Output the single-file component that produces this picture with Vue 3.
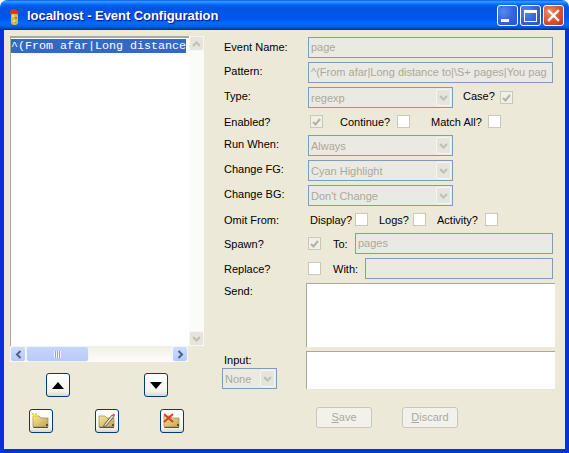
<script setup>
const folderBtns = ['new', 'edit', 'del']
</script>

<template>
  <div class="win">
    <div class="title">
      <svg class="appicon" width="16" height="20" viewBox="0 0 16 20">
        <rect x="4" y="8" width="7" height="12" rx="3" fill="#d9b84a" />
        <rect x="5" y="10" width="2" height="2" fill="#f3dc7a" />
        <rect x="8" y="12" width="2" height="2" fill="#a58a2c" />
        <rect x="6" y="15" width="2" height="2" fill="#f3dc7a" />
        <rect x="8" y="17" width="1" height="1" fill="#a58a2c" />
        <path d="M3 8 L3 6 Q4 4 7 4 Q10 4 10 6 L13 6.500 L11 8 Z" fill="#d8342a" />
        <rect x="3" y="8" width="8" height="1" fill="#8a7420" />
      </svg>
      <span class="title-text">localhost - Event Configuration</span>
      <div class="caps">
        <div class="cap blue">
          <span class="min-glyph"></span>
        </div>
        <div class="cap blue">
          <span class="max-glyph"></span>
        </div>
        <div class="cap red">
          <svg width="13" height="13" viewBox="0 0 13 13">
            <path d="M2 2 L11 11 M11 2 L2 11" stroke="#fff" stroke-width="2.400" stroke-linecap="square" />
          </svg>
        </div>
      </div>
    </div>

    <div class="client">
      <div class="left">
        <div class="listwrap">
          <div class="list">
            <div class="list-item">^(From afar|Long distance</div>
          </div>
          <div class="vscroll">
            <div class="vbtn">
              <svg width="9" height="6" viewBox="0 0 9 6"><path d="M1 5 L4.500 1.500 L8 5" fill="none" stroke="#c0bfb4" stroke-width="2" /></svg>
            </div>
            <div class="vbtn">
              <svg width="9" height="6" viewBox="0 0 9 6"><path d="M1 1 L4.500 4.500 L8 1" fill="none" stroke="#c0bfb4" stroke-width="2" /></svg>
            </div>
          </div>
        </div>
        <div class="hscroll">
          <div class="hbtn">
            <svg width="7" height="9" viewBox="0 0 7 9"><path d="M5.500 1 L2 4.500 L5.500 8" fill="none" stroke="#4d6185" stroke-width="2" /></svg>
          </div>
          <div class="thumb">
            <span class="grip"></span>
          </div>
          <div class="hspace"></div>
          <div class="hbtn">
            <svg width="7" height="9" viewBox="0 0 7 9"><path d="M1.500 1 L5 4.500 L1.500 8" fill="none" stroke="#4d6185" stroke-width="2" /></svg>
          </div>
        </div>
        <div class="updown">
          <div class="tbtn">
            <svg width="12" height="7" viewBox="0 0 12 7"><path d="M6 0 L12 7 L0 7 Z" fill="#000" /></svg>
          </div>
          <div class="tbtn">
            <svg width="12" height="7" viewBox="0 0 12 7"><path d="M0 0 L12 0 L6 7 Z" fill="#000" /></svg>
          </div>
        </div>
        <div class="folders">
          <div v-for="b in folderBtns" :key="b" class="tbtn">
            <svg width="18" height="16" viewBox="0 0 18 16">
              <defs>
                <linearGradient :id="'g' + b" x1="0" y1="0" x2="1" y2="1">
                  <stop offset="0" stop-color="#f6e89e" />
                  <stop offset="1" stop-color="#c2a24e" />
                </linearGradient>
              </defs>
              <path d="M1 3 L7 3 L9 5 L16 5 L16 14 L1 14 Z" :fill="'url(#g' + b + ')'" stroke="#8a7a4a" stroke-width="0.600" />
              <path d="M1 14 L16 14 L16 15 L2 15 Z" fill="#5e5232" />
              <rect x="14" y="11" width="2" height="2" fill="#5e5232" />
              <g v-if="b === 'new'" fill="#f0d84a">
                <rect x="0" y="0" width="2" height="2" />
                <rect x="3" y="0" width="2" height="2" />
                <rect x="1" y="2" width="2" height="2" />
                <rect x="4" y="3" width="2" height="2" />
                <rect x="0" y="4" width="2" height="2" />
                <rect x="3" y="6" width="2" height="2" />
              </g>
              <g v-if="b === 'edit'">
                <path d="M6 12 L14 2 L16 3.500 L8 13 L5.500 13.500 Z" fill="#e8dfc0" stroke="#4a4a4a" stroke-width="0.800" />
                <path d="M14 2 L15.500 0.500 L17.500 2 L16 3.500 Z" fill="#d06060" />
              </g>
              <g v-if="b === 'del'">
                <path d="M1 1 L10 9 M10 1 L1 9" stroke="#e03a2c" stroke-width="2" />
              </g>
            </svg>
          </div>
        </div>
      </div>

      <div class="form">
        <div class="row raise1">
          <span class="lbl">Event Name:</span>
          <div class="field grow">page</div>
        </div>
        <div class="row raise2">
          <span class="lbl">Pattern:</span>
          <div class="field grow clip">^(From afar|Long distance to|\S+ pages|You pag</div>
        </div>
        <div class="row raise2">
          <span class="lbl">Type:</span>
          <div class="select sel145"><span class="seltext">regexp</span><span class="arrow"><svg width="9" height="6" viewBox="0 0 9 6"><path d="M1 1 L4.500 4.500 L8 1" fill="none" stroke="#c0bfb4" stroke-width="2" /></svg></span></div>
          <span class="t case-l">Case?</span>
          <span class="cb on"><svg width="9" height="8" viewBox="0 0 9 8"><path d="M1 4 L3.500 6.500 L8 1" fill="none" stroke="#b5b2a2" stroke-width="2" /></svg></span>
        </div>
        <div class="row check">
          <span class="lbl">Enabled?</span>
          <span class="cb on m2"><svg width="9" height="8" viewBox="0 0 9 8"><path d="M1 4 L3.500 6.500 L8 1" fill="none" stroke="#b5b2a2" stroke-width="2" /></svg></span>
          <span class="t cont-l">Continue?</span>
          <span class="cb"></span>
          <span class="t match-l">Match All?</span>
          <span class="cb"></span>
        </div>
        <div class="row raise2">
          <span class="lbl">Run When:</span>
          <div class="select sel145"><span class="seltext">Always</span><span class="arrow"><svg width="9" height="6" viewBox="0 0 9 6"><path d="M1 1 L4.500 4.500 L8 1" fill="none" stroke="#c0bfb4" stroke-width="2" /></svg></span></div>
        </div>
        <div class="row raise2">
          <span class="lbl">Change FG:</span>
          <div class="select sel145"><span class="seltext">Cyan Highlight</span><span class="arrow"><svg width="9" height="6" viewBox="0 0 9 6"><path d="M1 1 L4.500 4.500 L8 1" fill="none" stroke="#c0bfb4" stroke-width="2" /></svg></span></div>
        </div>
        <div class="row raise2">
          <span class="lbl">Change BG:</span>
          <div class="select sel145"><span class="seltext">Don't Change</span><span class="arrow"><svg width="9" height="6" viewBox="0 0 9 6"><path d="M1 1 L4.500 4.500 L8 1" fill="none" stroke="#c0bfb4" stroke-width="2" /></svg></span></div>
        </div>
        <div class="row check">
          <span class="lbl">Omit From:</span>
          <span class="t disp-l">Display?</span>
          <span class="cb"></span>
          <span class="t logs-l">Logs?</span>
          <span class="cb"></span>
          <span class="t act-l">Activity?</span>
          <span class="cb"></span>
        </div>
        <div class="row">
          <span class="lbl">Spawn?</span>
          <span class="cb on"><svg width="9" height="8" viewBox="0 0 9 8"><path d="M1 4 L3.500 6.500 L8 1" fill="none" stroke="#b5b2a2" stroke-width="2" /></svg></span>
          <span class="t to-l">To:</span>
          <div class="field grow">pages</div>
        </div>
        <div class="row">
          <span class="lbl">Replace?</span>
          <span class="cb"></span>
          <span class="t with-l">With:</span>
          <div class="field grow"></div>
        </div>
        <div class="send">
          <span class="lbl send-l">Send:</span>
          <div class="area send-a"></div>
        </div>
        <div class="input-row">
          <div class="input-col">
            <span class="t input-l">Input:</span>
            <div class="select sel55"><span class="seltext">None</span><span class="arrow"><svg width="9" height="6" viewBox="0 0 9 6"><path d="M1 1 L4.500 4.500 L8 1" fill="none" stroke="#c0bfb4" stroke-width="2" /></svg></span></div>
          </div>
          <div class="area input-a"></div>
        </div>
        <div class="actions">
          <div class="btn"><u>S</u>ave</div>
          <div class="btn"><u>D</u>iscard</div>
        </div>
      </div>
    </div>
  </div>
</template>

<style>
html, body { margin: 0; background: #fff; }
</style>

<style scoped>
.win {
  width: 569px;
  height: 453px;
  display: flex;
  flex-direction: column;
  font-family: "Liberation Sans", "Noto Sans", sans-serif;
  font-size: 11px;
  color: #000;
  overflow: hidden;
}
.title {
  height: 30px;
  flex: none;
  box-sizing: border-box;
  padding: 1px 5px 0 7px;
  display: flex;
  align-items: center;
  border-radius: 7px 7px 0 0;
  background: linear-gradient(180deg, #0058ee 0%, #3593ff 5%, #288eff 8%, #127dff 11%, #036ffc 14%, #0262ee 18%, #0057e5 24%, #0054e3 30%, #0055eb 56%, #005bf5 66%, #026afe 76%, #0062ef 86%, #0052d6 92%, #0040ab 96%, #003092 100%);
}
.appicon { flex: none; margin-top: -2px; }
.title-text {
  margin-left: 4px;
  font-family: "Liberation Sans", sans-serif;
  font-weight: 700;
  font-size: 13px;
  letter-spacing: -0.050px;
  color: #fff;
  text-shadow: 1px 1px 1px #0f1089;
  white-space: nowrap;
}
.caps { margin-left: auto; display: flex; gap: 2px; }
.cap {
  width: 21px;
  height: 21px;
  box-sizing: border-box;
  border: 1px solid #fff;
  border-radius: 3px;
  display: flex;
  align-items: center;
  justify-content: center;
}
.blue { background: radial-gradient(circle at 30% 30%, #5a86ee 0%, #3565e0 50%, #2a4fc4 100%); }
.red { background: radial-gradient(circle at 30% 30%, #ec8a6c 0%, #d9562f 50%, #b93a18 100%); }
.min-glyph { width: 8px; height: 3px; background: #fff; margin: 9px 6px 0 0; }
.max-glyph { width: 13px; height: 12px; box-sizing: border-box; border: 1px solid #fff; border-top-width: 3px; }
.client {
  flex: 1;
  min-height: 0;
  display: flex;
  background: #ece9d8;
  border: solid #0831d9;
  border-width: 0 4px 4px;
  border-bottom-color: #0535c6;
}
.left { width: 218px; flex: none; box-sizing: border-box; padding: 6px 0 0 6px; }
.listwrap { display: flex; width: 194px; height: 310px; }
.list {
  width: 179px;
  flex: none;
  box-sizing: border-box;
  background: #fff;
  border-top: 2px solid #aca899;
  border-left: 1px solid #aca899;
  padding-top: 1px;
}
.list-item {
  height: 14px;
  margin-right: 3px;
  background: #316ac5;
  color: #fff;
  font-family: "Liberation Mono", monospace;
  font-size: 11.670px;
  line-height: 14px;
  white-space: nowrap;
  overflow: hidden;
}
.vscroll {
  width: 15px;
  flex: none;
  background: #fbfbf8;
  display: flex;
  flex-direction: column;
  justify-content: space-between;
}
.vbtn {
  height: 15px;
  box-sizing: border-box;
  background: #e6e5dc;
  border: 1px solid #f7f6f2;
  border-radius: 2px;
  display: flex;
  align-items: center;
  justify-content: center;
}
.hscroll {
  height: 16px;
  width: 178px;
  display: flex;
  background: linear-gradient(180deg, #f1efe6, #fdfdfb);
}
.hbtn {
  width: 16px;
  flex: none;
  box-sizing: border-box;
  background: linear-gradient(180deg, #cfdcfb, #b6c9f8);
  border: 1px solid #f4f6fd;
  border-radius: 3px;
  display: flex;
  align-items: center;
  justify-content: center;
}
.thumb {
  width: 63px;
  flex: none;
  box-sizing: border-box;
  background: linear-gradient(180deg, #c5d5fb, #b7caf8);
  border: 1px solid #f0f3fd;
  border-radius: 3px;
  display: flex;
  align-items: center;
  justify-content: center;
}
.grip {
  width: 7px;
  height: 7px;
  background: repeating-linear-gradient(90deg, #eef3fe 0 1px, #8ca6de 1px 2px);
}
.hspace { flex: 1; }
.updown {
  margin: 11px 0 0 36px;
  width: 122px;
  display: flex;
  justify-content: space-between;
}
.tbtn {
  width: 24px;
  height: 24px;
  flex: none;
  box-sizing: border-box;
  background: linear-gradient(180deg, #fff, #f3f2ea 80%, #dcd8c8);
  border: 1px solid #003c74;
  border-radius: 3px;
  display: flex;
  align-items: center;
  justify-content: center;
}
.folders {
  margin-top: 12px;
  margin-left: 19px;
  width: 155px;
  display: flex;
  justify-content: space-between;
}
.form {
  width: 333px;
  flex: none;
  display: flex;
  flex-direction: column;
  gap: 4px;
  padding-top: 7px;
}
.row {
  display: flex;
  align-items: center;
  height: 21px;
  padding: 0 2px;
  white-space: nowrap;
}
.row.check { height: 19px; }
.lbl { width: 84px; flex: none; }
.raise1 .lbl { padding-bottom: 2px; }
.raise2 .lbl, .raise2 .t { padding-bottom: 4px; }
.t { flex: none; }
.field {
  height: 21px;
  box-sizing: border-box;
  background: #ebeae2;
  border: 1px solid #7f9db9;
  color: #aca899;
  line-height: 18px;
  padding: 0 2px;
  white-space: nowrap;
}
.grow { flex: 1; min-width: 0; }
.clip { overflow: hidden; }
.select {
  height: 21px;
  box-sizing: border-box;
  background: #ebeae2;
  border: 1px solid #7f9db9;
  color: #aca899;
  display: flex;
  align-items: center;
  padding: 0 1px 0 2px;
}
.seltext { flex: 1; min-width: 0; overflow: hidden; }
.sel145 { width: 145px; flex: none; }
.sel55 { width: 55px; flex: none; }
.arrow {
  width: 15px;
  height: 17px;
  flex: none;
  background: #e6e5dc;
  border: 1px solid #f7f6f2;
  box-sizing: border-box;
  border-radius: 2px;
  display: flex;
  align-items: center;
  justify-content: center;
}
.cb {
  width: 13px;
  height: 13px;
  flex: none;
  box-sizing: border-box;
  background: #fff;
  border: 1px solid #cac8bb;
  display: flex;
  align-items: center;
  justify-content: center;
}
.cb.on { background: #f0efe8; }
.m2 { margin-left: 2px; }
.case-l { margin-left: 10px; width: 37px; }
.cont-l { margin-left: 17px; width: 57px; }
.match-l { margin-left: 21px; width: 57px; }
.disp-l { margin-left: 2px; width: 45px; }
.logs-l { margin-left: 11px; width: 34px; }
.act-l { margin-left: 11px; width: 48px; }
.to-l { margin-left: 12px; width: 22px; }
.with-l { margin-left: 12px; width: 32px; }
.send { display: flex; height: 64px; padding-left: 2px; }
.send-l { width: 82px; margin-top: 2px; }
.area {
  box-sizing: border-box;
  width: 249px;
  flex: none;
  background: #fff;
  border-top: 1px solid #aca899;
  border-left: 1px solid #aca899;
}
.input-row { display: flex; height: 38px; }
.input-col { width: 84px; flex: none; display: flex; flex-direction: column; justify-content: flex-end; }
.input-l { padding-left: 2px; line-height: 16px; }
.input-a { height: 38px; }
.actions { display: flex; gap: 30px; margin: 14px 0 0 94px; }
.btn {
  width: 56px;
  height: 21px;
  box-sizing: border-box;
  background: #f3f2ea;
  border: 1px solid #c9c7ba;
  border-radius: 3px;
  color: #aca899;
  text-align: center;
  line-height: 19px;
}
</style>
